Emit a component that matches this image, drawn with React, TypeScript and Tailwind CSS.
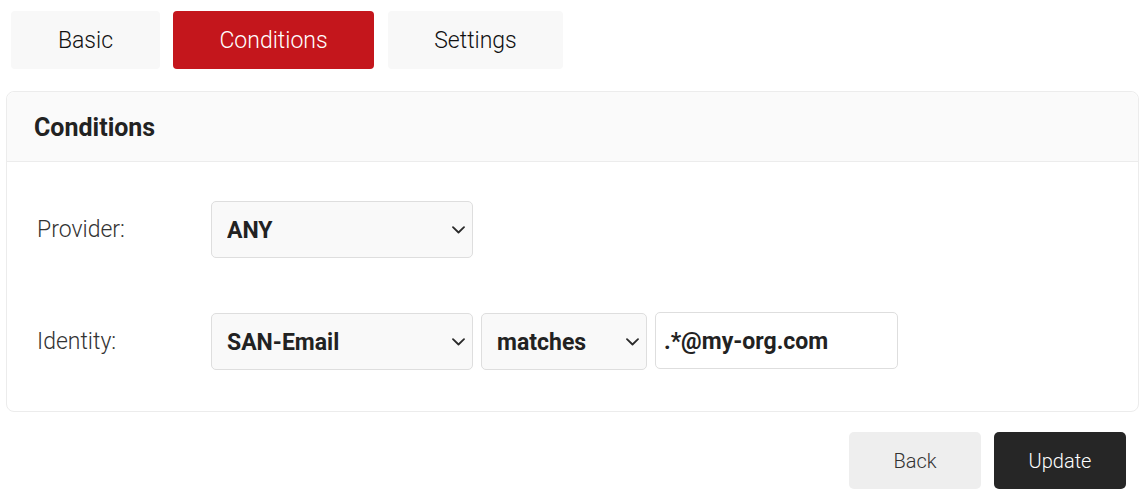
import React from "react";

function Chevron() {
  return (
    <svg className="pointer-events-none absolute right-[8px] top-1/2 -translate-y-1/2" width="13" height="8" viewBox="0 0 13 8" fill="none">
      <path d="M1 1.2l5.5 5.3L12 1.2" stroke="#2a2a2a" strokeWidth="1.8" strokeLinecap="round" strokeLinejoin="round" />
    </svg>
  );
}

function Select({ value, width }: { value: string; width: string }) {
  return (
    <div className={`relative ${width}`}>
      <select
        defaultValue={value}
        className="h-[57px] w-full appearance-none rounded-[5px] border border-[#dedede] bg-[#f9f9f9] pl-[15px] pr-8 pt-[3px] text-[23px] font-bold text-[#222] outline-none"
      >
        <option>{value}</option>
      </select>
      <Chevron />
    </div>
  );
}

export default function App() {
  const tabs = ["Basic", "Conditions", "Settings"];
  return (
    <div className="min-h-[500px] bg-white font-['Roboto',sans-serif] text-[#222]">
      {/* Tabs */}
      <div className="flex gap-[13px] pl-[11px] pt-[11px]">
        {tabs.map((t) => (
          <button
            key={t}
            className={
              t === "Conditions"
                ? "h-[58px] w-[201px] rounded-[4px] bg-[#c4161c] pt-[2px] text-[23px] font-light text-white"
                : t === "Basic"
                ? "h-[58px] w-[149px] rounded-[4px] bg-[#f8f8f8] pt-[2px] text-[23px] font-light text-[#111]"
                : "ml-[1px] h-[58px] w-[175px] rounded-[4px] bg-[#f8f8f8] pt-[2px] text-[23px] font-light text-[#111]"
            }
          >
            {t}
          </button>
        ))}
      </div>

      {/* Card */}
      <div className="mx-[6px] mt-[22px] w-[1133px] rounded-[8px] border border-[#ececec]">
        <div className="flex h-[70px] items-center rounded-t-[8px] border-b border-[#ececec] bg-[#fafafa] pl-[27px] pt-[2px]">
          <h2 className="text-[25px] font-bold text-[#222]">Conditions</h2>
        </div>
        <div className="flex flex-col gap-[55px] pb-[41px] pl-[30px] pt-[39px]">
          <div className="flex items-center">
            <label className="w-[174px] pt-[2px] text-[23px] font-light text-[#333]">Provider:</label>
            <Select value="ANY" width="w-[262px]" />
          </div>
          <div className="flex items-center">
            <label className="w-[174px] pt-[2px] text-[23px] font-light text-[#333]">Identity:</label>
            <div className="flex items-center gap-[8px]">
              <Select value="SAN-Email" width="w-[262px]" />
              <Select value="matches" width="w-[166px]" />
              <input
                defaultValue=".*@my-org.com"
                className="-mt-[2px] h-[57px] w-[243px] rounded-[5px] border border-[#dedede] bg-white px-[8px] pt-[2px] text-[23px] font-bold text-[#222] outline-none"
              />
            </div>
          </div>
        </div>
      </div>

      {/* Footer buttons */}
      <div className="mt-[20px] flex justify-end gap-[13px] pr-[19px]">
        <button className="h-[57px] w-[132px] rounded-[5px] bg-[#eeeeee] text-[20px] font-light text-[#333]">Back</button>
        <button className="h-[57px] w-[132px] rounded-[5px] bg-[#262626] text-[20px] font-light text-white">Update</button>
      </div>
    </div>
  );
}
